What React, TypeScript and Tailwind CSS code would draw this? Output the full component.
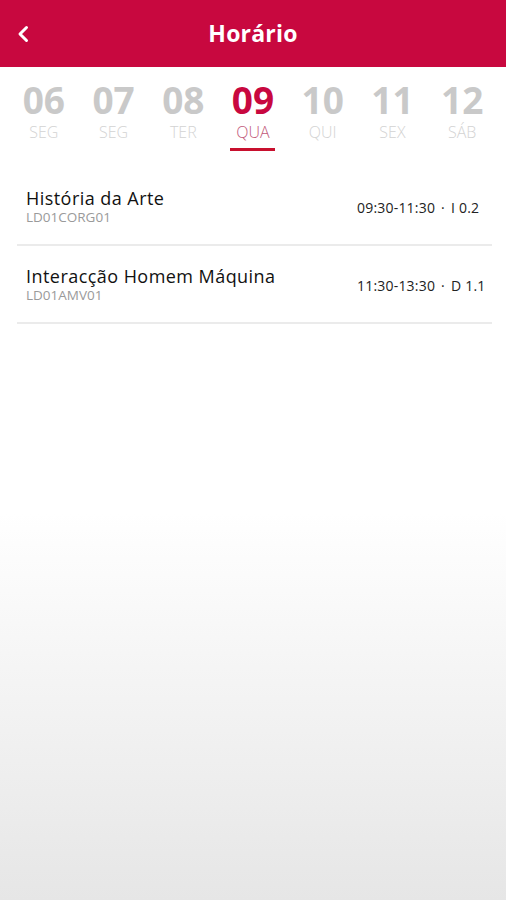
import React from "react";

const days = [
  { n: "06", d: "SEG" },
  { n: "07", d: "SEG" },
  { n: "08", d: "TER" },
  { n: "09", d: "QUA", active: true },
  { n: "10", d: "QUI" },
  { n: "11", d: "SEX" },
  { n: "12", d: "SÁB" },
];

const classes = [
  { title: "História da Arte", code: "LD01CORG01", time: "09:30-11:30", room: "I 0.2" },
  { title: "Interacção Homem Máquina", code: "LD01AMV01", time: "11:30-13:30", room: "D 1.1" },
];

export default function App() {
  return (
    <div
      className="w-[506px] min-h-[900px] bg-[linear-gradient(to_bottom,#ffffff_0%,#ffffff_57%,#e6e6e6_100%)]"
      style={{ fontFamily: '"Open Sans", "Noto Sans", sans-serif' }}
    >
      <header className="relative h-[67px] bg-[#c8083f] flex items-center justify-center">
        <button className="absolute left-[14px] top-[24px] w-[18px] h-[20px] flex items-center justify-center">
          <svg width="14" height="18" viewBox="0 0 14 18" fill="none">
            <path d="M10.5 2.5L4 9l6.5 6.5" stroke="#ffffff" strokeWidth="3" strokeLinecap="round" strokeLinejoin="round" />
          </svg>
        </button>
        <h1 className="text-white text-[23px] font-bold leading-none tracking-[0.2px]">Horário</h1>
      </header>

      <div className="grid grid-cols-7 px-[9px] pt-[13px]">
        {days.map((day) => (
          <div key={day.n} className="flex flex-col items-center">
            <span
              className={`text-[37px] font-bold leading-[40px] ${day.active ? "text-[#c8083f]" : "text-[#c9c9c9]"}`}
            >
              {day.n}
            </span>
            <span
              className={`mt-[3px] text-[16px] font-light leading-[18px] ${day.active ? "text-[#c25a7a]" : "text-[#d3d3d3]"}`}
            >
              {day.d}
            </span>
            <div className={`mt-[7px] h-[3px] w-[45px] ${day.active ? "bg-[#c8102e]" : "bg-transparent"}`} />
          </div>
        ))}
      </div>

      <div className="px-[17px] pr-[14px] mt-[17px]">
        {classes.map((c) => (
          <div key={c.code} className="h-[78px] flex items-center border-b-2 border-[#ebebeb] pl-[9px]">
            <div className="flex-1 flex flex-col pt-[2px]">
              <span className="text-[18px] leading-[20px] tracking-[0.45px] text-[#111111]">{c.title}</span>
              <span className="mt-[1px] text-[13.5px] leading-[17px] text-[#9a9a9a]">{c.code}</span>
            </div>
            <div className="w-[135px] text-[14px] tracking-[0.2px] text-[#222222] leading-none pt-[4px]">
              {c.time}
              <span className="mx-[6px]">·</span>
              {c.room}
            </div>
          </div>
        ))}
      </div>
    </div>
  );
}
